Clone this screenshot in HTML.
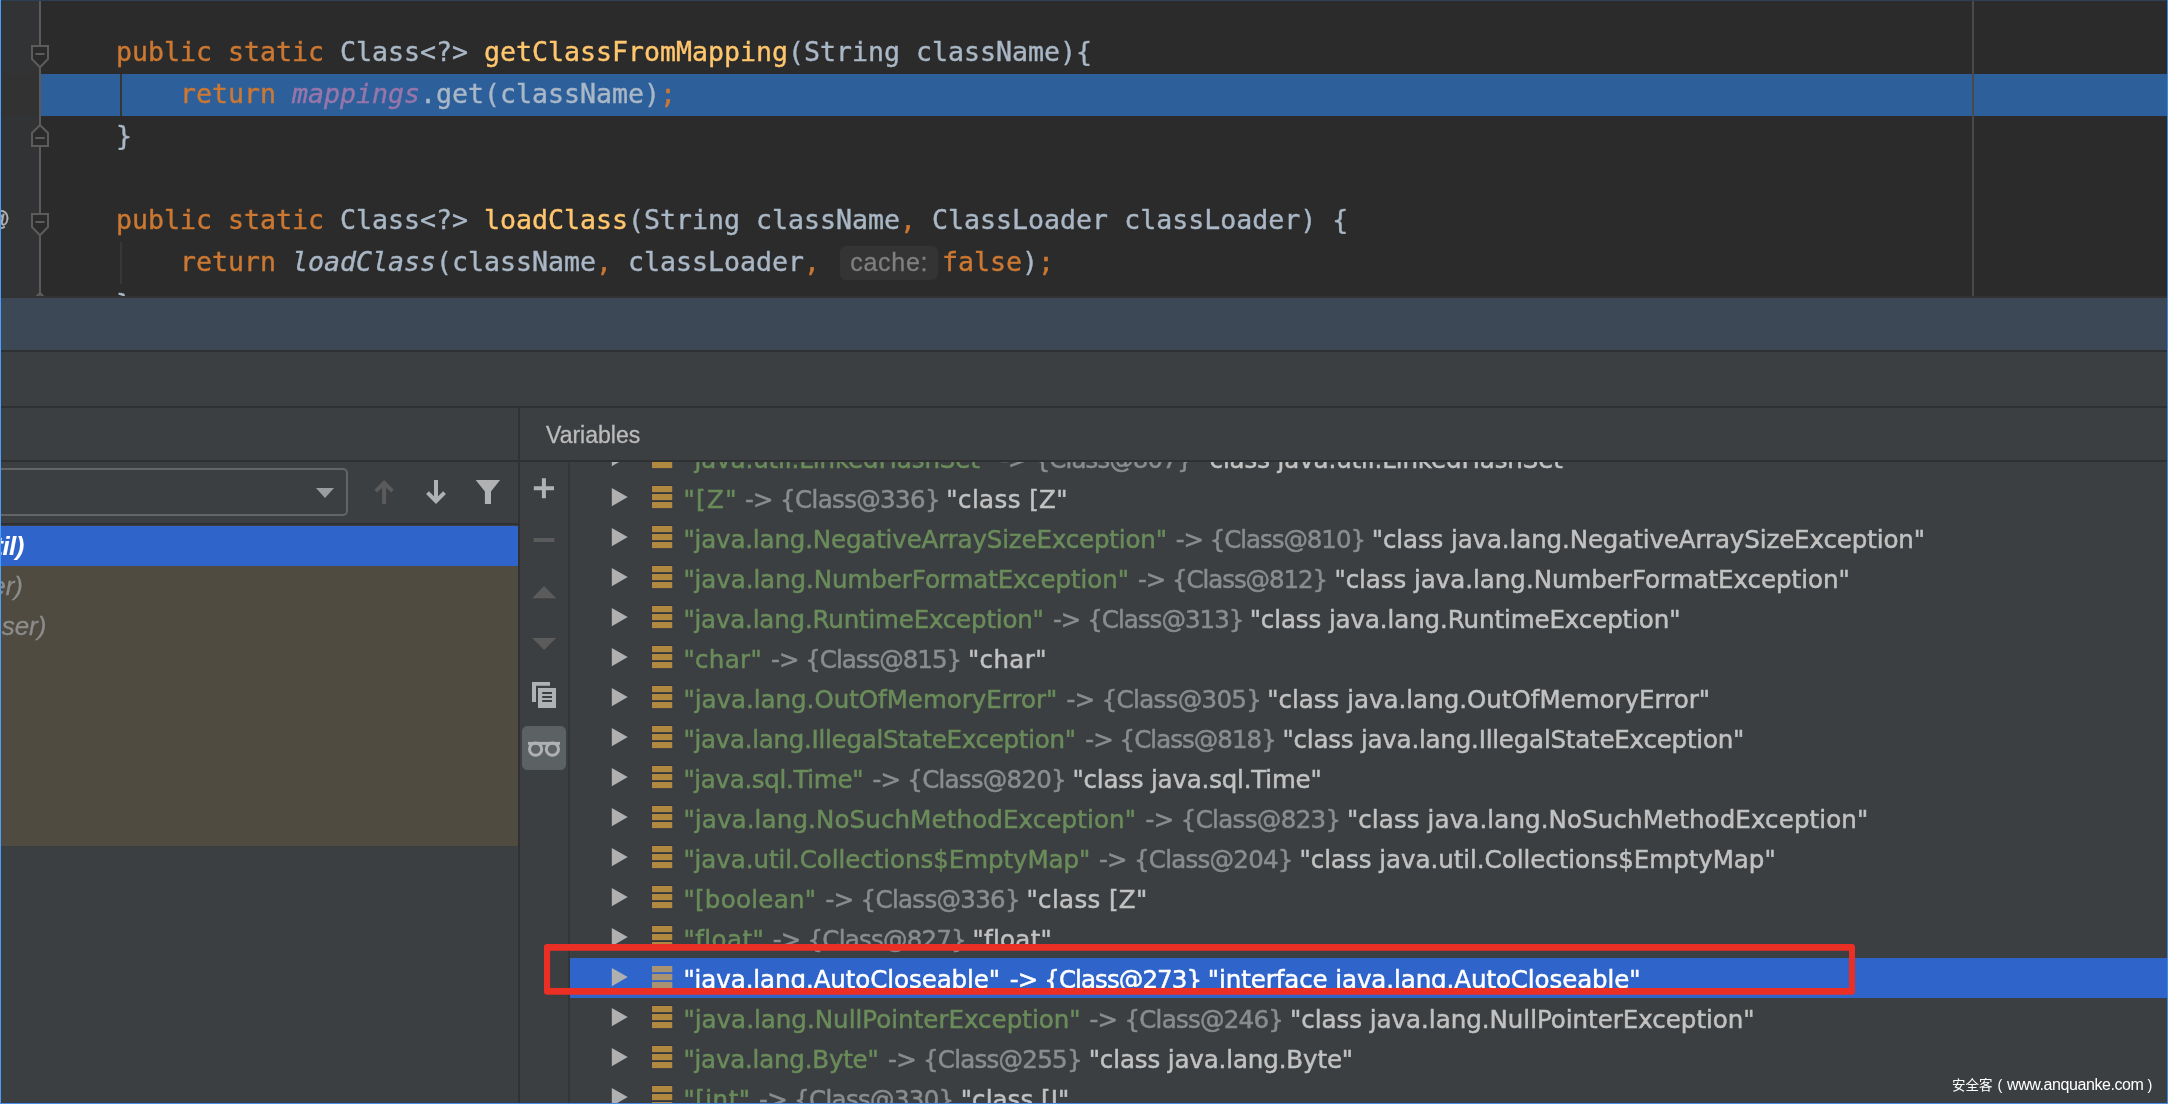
<!DOCTYPE html><html><head><meta charset="utf-8"><title>debug</title><style>
html,body{margin:0;padding:0}
body{width:2168px;height:1104px;overflow:hidden;background:#3c3f41;position:relative;font-family:"Liberation Sans","Noto Sans CJK SC",sans-serif}
.abs{position:absolute}
#app{left:0;top:0;width:2168px;height:1104px;overflow:hidden;will-change:transform}
#editor{left:0;top:0;width:2168px;height:297px;background:#2b2b2b;overflow:hidden}
#gutter{left:0;top:0;width:40px;height:297px;background:#313335}
#gline{left:39px;top:0;width:2px;height:297px;background:#5a5a5a}
#hl{left:41px;top:74px;width:2127px;height:42px;background:#2d5f9b}
#margin{left:1972px;top:0;width:2px;height:296px;background:#4a4a4a}
.cl{position:absolute;left:116px;height:42px;line-height:42px;white-space:pre;font-family:"DejaVu Sans Mono","Liberation Mono",monospace;font-size:26.58px;color:#a9b7c6;letter-spacing:0;-webkit-text-stroke:0.4px currentColor;margin-top:-1px}
.k{color:#cc7832}.f{color:#ffc66d}.p{color:#9876aa;font-style:italic}.i{font-style:italic}
.hint{position:absolute;left:840px;top:246px;width:97.5px;height:34px;border-radius:6px;background:#343434;color:#7f7f7f;font-family:"Liberation Sans",sans-serif;font-size:25px;letter-spacing:0.75px;line-height:33px;text-align:center;-webkit-text-stroke:0.3px currentColor;text-indent:1px}
#band{left:0;top:297px;width:2168px;height:53px;background:#3d4857}
.hline{position:absolute;left:0;width:2168px;height:2px;background:#2f3031}
.row{position:absolute;left:0;width:2168px;height:40px}
.t{position:absolute;top:2.5px;height:40px;line-height:40px;white-space:pre;font-family:"DejaVu Sans","Liberation Sans",sans-serif;font-size:24.5px;-webkit-text-stroke:0.5px currentColor}
.tk{color:#6a8c5a}.tm{color:#8a8c8e}.tv{color:#c2c2c2}
.sel .t,.sel .t span{color:#fff}
</style></head><body><div id="app" class="abs">
<div id="editor" class="abs">
<div id="gutter" class="abs"></div><div id="gline" class="abs"></div>
<div id="hl" class="abs"></div>
<div class="abs" style="left:1px;top:74px;width:38px;height:42px;background:#323232"></div>
<div class="abs" style="left:120px;top:74px;width:2px;height:42px;background:#383634"></div>
<div class="abs" style="left:120px;top:242px;width:2px;height:42px;background:#373737"></div>
<div id="margin" class="abs"></div>
<div class="cl" style="top:32px"><span class="k">public static </span>Class&lt;?&gt; <span class="f">getClassFromMapping</span>(String className){</div>
<div class="cl" style="top:74px">    <span class="k">return </span><span class="p">mappings</span>.get(className)<span class="k">;</span></div>
<div class="cl" style="top:116px">}</div>
<div class="cl" style="top:200px"><span class="k">public static </span>Class&lt;?&gt; <span class="f">loadClass</span>(String className<span class="k">, </span>ClassLoader classLoader) {</div>
<div class="cl" style="top:242px">    <span class="k">return </span><span class="i">loadClass</span>(className<span class="k">, </span>classLoader<span class="k">, </span></div>
<div class="cl" style="top:242px;left:942px"><span class="k">false</span>)<span class="k">;</span></div>
<div class="cl" style="top:284px">}</div>
<div class="hint">cache:</div>
<svg class="abs" style="left:0;top:0" width="60" height="297" viewBox="0 0 60 297" fill="none" stroke="#5c5c5c" stroke-width="2">
<path d="M32 46H48V59L40 67.3L32 59Z" fill="#2b2b2b"/><path d="M35.5 54H44.5"/>
<path d="M32 146.1H48V133L40 125.2L32 133Z" fill="#2b2b2b"/><path d="M35.2 138H44.8"/>
<path d="M32 214H48V227L40 235.2L32 227Z" fill="#2b2b2b"/><path d="M35.5 222H44.5"/>
<path d="M34 299L40 293L46 299"/>
</svg>
<div class="abs" style="left:-12.3px;top:203px;font-family:'Liberation Sans',sans-serif;font-size:22px;color:#b4b4b4;line-height:32px;-webkit-text-stroke:0.3px currentColor">@</div>
</div>
<div id="band" class="abs"></div>
<div class="hline" style="top:296px;height:1.5px;background:#323232"></div>
<div class="hline" style="top:350px"></div>
<div class="hline" style="top:406px"></div>
<div class="hline" style="top:460px"></div>
<div class="abs" style="left:0;top:462px;width:518px;height:642px;overflow:hidden">
<div class="abs" style="left:-20px;top:6px;width:363.5px;height:44px;border:2px solid #646464;border-radius:5px;box-sizing:content-box"></div>
<div class="hline" style="top:60.5px;width:518px"></div>
<div class="abs" style="left:0;top:64px;width:518px;height:40px;background:#2f65ca"></div>
<div class="abs" style="left:0;top:104px;width:518px;height:280px;background:#4f4b41"></div>
<div class="abs" style="right:494.3px;top:63.8px;height:40px;line-height:40px;font-size:26px;font-style:italic;font-weight:bold;color:#fff;white-space:pre;letter-spacing:-0.6px">til)</div>
<div class="abs" style="right:495px;top:103.8px;height:40px;line-height:40px;font-size:26px;font-style:italic;color:#8c8c8c;white-space:pre;-webkit-text-stroke:0.3px currentColor">er)</div>
<div class="abs" style="right:471.6px;top:143.8px;height:40px;line-height:40px;font-size:26px;font-style:italic;color:#8c8c8c;white-space:pre;-webkit-text-stroke:0.3px currentColor">ser)</div>
<svg class="abs" style="left:300px;top:0" width="218" height="62" viewBox="300 462 218 62">
<path d="M316 488H334L325 498Z" fill="#9a9da0"/>
<g fill="none" stroke="#5b5b5b" stroke-width="4"><path d="M384.1 503.9V482.5"/><path d="M375.8 491.2L384.1 482.9L392.4 491.2" stroke-linejoin="miter"/></g>
<g fill="none" stroke="#afb1b3" stroke-width="4"><path d="M436 480V501.5"/><path d="M427.5 492.6L436 501.2L444.5 492.6" stroke-linejoin="miter"/></g>
<path d="M475.7 480H500.1L491 491.4V503.9H484.9V491.4Z" fill="#afb1b3"/>
</svg>
</div>
<div class="abs" style="left:518px;top:407px;width:2px;height:697px;background:#313131"></div>
<div class="abs" style="left:568px;top:462px;width:2px;height:642px;background:#343536"></div>
<div class="abs" style="left:546px;top:409px;height:52px;line-height:52px;font-size:23px;color:#bbbbbb;-webkit-text-stroke:0.3px currentColor">Variables</div>
<svg class="abs" style="left:520px;top:462px" width="48" height="330" viewBox="520 462 48 330">
<path d="M533.8 488.2H554M543.9 478.2V498.2" stroke="#afb1b3" stroke-width="4" fill="none"/>
<path d="M533.6 540H554.4" stroke="#5b5b5b" stroke-width="4" fill="none"/>
<path d="M532.1 598.3L544.1 586.1L556.2 598.3Z" fill="#5b5b5b"/>
<path d="M532.1 638.1L544.1 650L556.2 638.1Z" fill="#5b5b5b"/>
<path d="M532 682H550V685.8H536V702H532Z" fill="#afb1b3"/>
<rect x="538" y="688" width="18" height="20" fill="#afb1b3"/>
<path d="M542.2 693H552M542.2 697H552M542.2 701H552" stroke="#3c3f41" stroke-width="1.8"/>
<rect x="522" y="726" width="44" height="44" rx="5.5" fill="#5c6164"/>
<g fill="none" stroke="#afb1b3" stroke-width="3"><circle cx="535.6" cy="749.2" r="6.1"/><circle cx="552.4" cy="749.2" r="6.1"/><path d="M528 743.4H560"/></g>
</svg>
<div class="abs" id="tree" style="left:570px;top:462px;width:1598px;height:642px;overflow:hidden">
<div class="row" style="top:-25px">
<svg class="abs" style="left:41px;top:10px" width="18" height="21" viewBox="0 0 18 21"><path d="M0.8 0.9L16.7 10L0.8 19.2Z" fill="#b0b0b0"/></svg>
<svg class="abs" style="left:81px;top:8px" width="23" height="25" viewBox="0 0 23 25"><rect x="0.5" y="0.3" width="21.3" height="24" fill="#30353d"/><g fill="#b08840"><rect x="1" y="1" width="20.3" height="6.2"/><rect x="1" y="9" width="20.3" height="6.2"/><rect x="1" y="17" width="20.3" height="6.2"/></g></svg>
<span class="t tk" style="left:113.39999999999998px;letter-spacing:-0.1px">"java.util.LinkedHashSet"</span>
<span class="t tm" style="left:430.20000000000005px;letter-spacing:-0.904px">-&gt; {Class@807}</span>
<span class="t tv" style="left:628.4000000000001px;letter-spacing:-0.105px">"class java.util.LinkedHashSet"</span>
</div>
<div class="row" style="top:15px">
<svg class="abs" style="left:41px;top:10px" width="18" height="21" viewBox="0 0 18 21"><path d="M0.8 0.9L16.7 10L0.8 19.2Z" fill="#b0b0b0"/></svg>
<svg class="abs" style="left:81px;top:8px" width="23" height="25" viewBox="0 0 23 25"><rect x="0.5" y="0.3" width="21.3" height="24" fill="#30353d"/><g fill="#b08840"><rect x="1" y="1" width="20.3" height="6.2"/><rect x="1" y="9" width="20.3" height="6.2"/><rect x="1" y="17" width="20.3" height="6.2"/></g></svg>
<span class="t tk" style="left:113.39999999999998px;letter-spacing:1.383px">"[Z"</span>
<span class="t tm" style="left:174.89999999999998px;letter-spacing:-0.65px">-&gt; {Class@336}</span>
<span class="t tv" style="left:376.29999999999995px;letter-spacing:0.422px">"class [Z"</span>
</div>
<div class="row" style="top:55px">
<svg class="abs" style="left:41px;top:10px" width="18" height="21" viewBox="0 0 18 21"><path d="M0.8 0.9L16.7 10L0.8 19.2Z" fill="#b0b0b0"/></svg>
<svg class="abs" style="left:81px;top:8px" width="23" height="25" viewBox="0 0 23 25"><rect x="0.5" y="0.3" width="21.3" height="24" fill="#30353d"/><g fill="#b08840"><rect x="1" y="1" width="20.3" height="6.2"/><rect x="1" y="9" width="20.3" height="6.2"/><rect x="1" y="17" width="20.3" height="6.2"/></g></svg>
<span class="t tk" style="left:113.39999999999998px;letter-spacing:-0.151px">"java.lang.NegativeArraySizeException"</span>
<span class="t tm" style="left:605.8px;letter-spacing:-1.065px">-&gt; {Class@810}</span>
<span class="t tv" style="left:801.8px;letter-spacing:-0.106px">"class java.lang.NegativeArraySizeException"</span>
</div>
<div class="row" style="top:95px">
<svg class="abs" style="left:41px;top:10px" width="18" height="21" viewBox="0 0 18 21"><path d="M0.8 0.9L16.7 10L0.8 19.2Z" fill="#b0b0b0"/></svg>
<svg class="abs" style="left:81px;top:8px" width="23" height="25" viewBox="0 0 23 25"><rect x="0.5" y="0.3" width="21.3" height="24" fill="#30353d"/><g fill="#b08840"><rect x="1" y="1" width="20.3" height="6.2"/><rect x="1" y="9" width="20.3" height="6.2"/><rect x="1" y="17" width="20.3" height="6.2"/></g></svg>
<span class="t tk" style="left:113.39999999999998px;letter-spacing:-0.067px">"java.lang.NumberFormatException"</span>
<span class="t tm" style="left:568.0px;letter-spacing:-1.065px">-&gt; {Class@812}</span>
<span class="t tv" style="left:764.4000000000001px;letter-spacing:-0.025px">"class java.lang.NumberFormatException"</span>
</div>
<div class="row" style="top:135px">
<svg class="abs" style="left:41px;top:10px" width="18" height="21" viewBox="0 0 18 21"><path d="M0.8 0.9L16.7 10L0.8 19.2Z" fill="#b0b0b0"/></svg>
<svg class="abs" style="left:81px;top:8px" width="23" height="25" viewBox="0 0 23 25"><rect x="0.5" y="0.3" width="21.3" height="24" fill="#30353d"/><g fill="#b08840"><rect x="1" y="1" width="20.3" height="6.2"/><rect x="1" y="9" width="20.3" height="6.2"/><rect x="1" y="17" width="20.3" height="6.2"/></g></svg>
<span class="t tk" style="left:113.39999999999998px;letter-spacing:-0.176px">"java.lang.RuntimeException"</span>
<span class="t tm" style="left:482.9000000000001px;letter-spacing:-0.965px">-&gt; {Class@313}</span>
<span class="t tv" style="left:679.7px;letter-spacing:-0.095px">"class java.lang.RuntimeException"</span>
</div>
<div class="row" style="top:175px">
<svg class="abs" style="left:41px;top:10px" width="18" height="21" viewBox="0 0 18 21"><path d="M0.8 0.9L16.7 10L0.8 19.2Z" fill="#b0b0b0"/></svg>
<svg class="abs" style="left:81px;top:8px" width="23" height="25" viewBox="0 0 23 25"><rect x="0.5" y="0.3" width="21.3" height="24" fill="#30353d"/><g fill="#b08840"><rect x="1" y="1" width="20.3" height="6.2"/><rect x="1" y="9" width="20.3" height="6.2"/><rect x="1" y="17" width="20.3" height="6.2"/></g></svg>
<span class="t tk" style="left:113.39999999999998px;letter-spacing:0.36px">"char"</span>
<span class="t tm" style="left:201.10000000000002px;letter-spacing:-1.004px">-&gt; {Class@815}</span>
<span class="t tv" style="left:397.9px;letter-spacing:0.4px">"char"</span>
</div>
<div class="row" style="top:215px">
<svg class="abs" style="left:41px;top:10px" width="18" height="21" viewBox="0 0 18 21"><path d="M0.8 0.9L16.7 10L0.8 19.2Z" fill="#b0b0b0"/></svg>
<svg class="abs" style="left:81px;top:8px" width="23" height="25" viewBox="0 0 23 25"><rect x="0.5" y="0.3" width="21.3" height="24" fill="#30353d"/><g fill="#b08840"><rect x="1" y="1" width="20.3" height="6.2"/><rect x="1" y="9" width="20.3" height="6.2"/><rect x="1" y="17" width="20.3" height="6.2"/></g></svg>
<span class="t tk" style="left:113.39999999999998px;letter-spacing:-0.007px">"java.lang.OutOfMemoryError"</span>
<span class="t tm" style="left:496.5999999999999px;letter-spacing:-0.681px">-&gt; {Class@305}</span>
<span class="t tv" style="left:697.2px;letter-spacing:0.009px">"class java.lang.OutOfMemoryError"</span>
</div>
<div class="row" style="top:255px">
<svg class="abs" style="left:41px;top:10px" width="18" height="21" viewBox="0 0 18 21"><path d="M0.8 0.9L16.7 10L0.8 19.2Z" fill="#b0b0b0"/></svg>
<svg class="abs" style="left:81px;top:8px" width="23" height="25" viewBox="0 0 23 25"><rect x="0.5" y="0.3" width="21.3" height="24" fill="#30353d"/><g fill="#b08840"><rect x="1" y="1" width="20.3" height="6.2"/><rect x="1" y="9" width="20.3" height="6.2"/><rect x="1" y="17" width="20.3" height="6.2"/></g></svg>
<span class="t tk" style="left:113.39999999999998px;letter-spacing:-0.266px">"java.lang.IllegalStateException"</span>
<span class="t tm" style="left:515.3px;letter-spacing:-0.965px">-&gt; {Class@818}</span>
<span class="t tv" style="left:712.5px;letter-spacing:-0.208px">"class java.lang.IllegalStateException"</span>
</div>
<div class="row" style="top:295px">
<svg class="abs" style="left:41px;top:10px" width="18" height="21" viewBox="0 0 18 21"><path d="M0.8 0.9L16.7 10L0.8 19.2Z" fill="#b0b0b0"/></svg>
<svg class="abs" style="left:81px;top:8px" width="23" height="25" viewBox="0 0 23 25"><rect x="0.5" y="0.3" width="21.3" height="24" fill="#30353d"/><g fill="#b08840"><rect x="1" y="1" width="20.3" height="6.2"/><rect x="1" y="9" width="20.3" height="6.2"/><rect x="1" y="17" width="20.3" height="6.2"/></g></svg>
<span class="t tk" style="left:113.39999999999998px;letter-spacing:-0.321px">"java.sql.Time"</span>
<span class="t tm" style="left:302.4px;letter-spacing:-0.75px">-&gt; {Class@820}</span>
<span class="t tv" style="left:502.5px;letter-spacing:-0.195px">"class java.sql.Time"</span>
</div>
<div class="row" style="top:335px">
<svg class="abs" style="left:41px;top:10px" width="18" height="21" viewBox="0 0 18 21"><path d="M0.8 0.9L16.7 10L0.8 19.2Z" fill="#b0b0b0"/></svg>
<svg class="abs" style="left:81px;top:8px" width="23" height="25" viewBox="0 0 23 25"><rect x="0.5" y="0.3" width="21.3" height="24" fill="#30353d"/><g fill="#b08840"><rect x="1" y="1" width="20.3" height="6.2"/><rect x="1" y="9" width="20.3" height="6.2"/><rect x="1" y="17" width="20.3" height="6.2"/></g></svg>
<span class="t tk" style="left:113.39999999999998px;letter-spacing:0.139px">"java.lang.NoSuchMethodException"</span>
<span class="t tm" style="left:575.5px;letter-spacing:-0.65px">-&gt; {Class@823}</span>
<span class="t tv" style="left:776.9000000000001px;letter-spacing:0.12px">"class java.lang.NoSuchMethodException"</span>
</div>
<div class="row" style="top:375px">
<svg class="abs" style="left:41px;top:10px" width="18" height="21" viewBox="0 0 18 21"><path d="M0.8 0.9L16.7 10L0.8 19.2Z" fill="#b0b0b0"/></svg>
<svg class="abs" style="left:81px;top:8px" width="23" height="25" viewBox="0 0 23 25"><rect x="0.5" y="0.3" width="21.3" height="24" fill="#30353d"/><g fill="#b08840"><rect x="1" y="1" width="20.3" height="6.2"/><rect x="1" y="9" width="20.3" height="6.2"/><rect x="1" y="17" width="20.3" height="6.2"/></g></svg>
<span class="t tk" style="left:113.39999999999998px;letter-spacing:-0.048px">"java.util.Collections$EmptyMap"</span>
<span class="t tm" style="left:529.0px;letter-spacing:-0.742px">-&gt; {Class@204}</span>
<span class="t tv" style="left:729.5px;letter-spacing:-0.024px">"class java.util.Collections$EmptyMap"</span>
</div>
<div class="row" style="top:415px">
<svg class="abs" style="left:41px;top:10px" width="18" height="21" viewBox="0 0 18 21"><path d="M0.8 0.9L16.7 10L0.8 19.2Z" fill="#b0b0b0"/></svg>
<svg class="abs" style="left:81px;top:8px" width="23" height="25" viewBox="0 0 23 25"><rect x="0.5" y="0.3" width="21.3" height="24" fill="#30353d"/><g fill="#b08840"><rect x="1" y="1" width="20.3" height="6.2"/><rect x="1" y="9" width="20.3" height="6.2"/><rect x="1" y="17" width="20.3" height="6.2"/></g></svg>
<span class="t tk" style="left:113.39999999999998px;letter-spacing:0.289px">"[boolean"</span>
<span class="t tm" style="left:255.5px;letter-spacing:-0.688px">-&gt; {Class@336}</span>
<span class="t tv" style="left:456.4000000000001px;letter-spacing:0.378px">"class [Z"</span>
</div>
<div class="row" style="top:455px">
<svg class="abs" style="left:41px;top:10px" width="18" height="21" viewBox="0 0 18 21"><path d="M0.8 0.9L16.7 10L0.8 19.2Z" fill="#b0b0b0"/></svg>
<svg class="abs" style="left:81px;top:8px" width="23" height="25" viewBox="0 0 23 25"><rect x="0.5" y="0.3" width="21.3" height="24" fill="#30353d"/><g fill="#b08840"><rect x="1" y="1" width="20.3" height="6.2"/><rect x="1" y="9" width="20.3" height="6.2"/><rect x="1" y="17" width="20.3" height="6.2"/></g></svg>
<span class="t tk" style="left:113.39999999999998px;letter-spacing:0.467px">"float"</span>
<span class="t tm" style="left:202.70000000000005px;letter-spacing:-0.773px">-&gt; {Class@827}</span>
<span class="t tv" style="left:402.4px;letter-spacing:0.317px">"float"</span>
</div>
<div class="row sel" style="top:495px">
<div class="abs" style="left:0;top:1px;width:1598px;height:40px;background:#2f65ca"></div>
<svg class="abs" style="left:41px;top:10px" width="18" height="21" viewBox="0 0 18 21"><path d="M0.8 0.9L16.7 10L0.8 19.2Z" fill="#b0b0b0"/></svg>
<svg class="abs" style="left:81px;top:8px" width="23" height="25" viewBox="0 0 23 25"><g fill="#a99373"><rect x="1" y="1" width="20.3" height="6.2"/><rect x="1" y="9" width="20.3" height="6.2"/><rect x="1" y="17" width="20.3" height="6.2"/></g></svg>
<span class="t tk" style="left:113.39999999999998px;letter-spacing:-0.073px">"java.lang.AutoCloseable"</span>
<span class="t tm" style="left:439.79999999999995px;letter-spacing:-0.912px">-&gt; {Class@273}</span>
<span class="t tv" style="left:637.8px;letter-spacing:-0.079px">"interface java.lang.AutoCloseable"</span>
</div>
<div class="row" style="top:535px">
<svg class="abs" style="left:41px;top:10px" width="18" height="21" viewBox="0 0 18 21"><path d="M0.8 0.9L16.7 10L0.8 19.2Z" fill="#b0b0b0"/></svg>
<svg class="abs" style="left:81px;top:8px" width="23" height="25" viewBox="0 0 23 25"><rect x="0.5" y="0.3" width="21.3" height="24" fill="#30353d"/><g fill="#b08840"><rect x="1" y="1" width="20.3" height="6.2"/><rect x="1" y="9" width="20.3" height="6.2"/><rect x="1" y="17" width="20.3" height="6.2"/></g></svg>
<span class="t tk" style="left:113.39999999999998px;letter-spacing:0.027px">"java.lang.NullPointerException"</span>
<span class="t tm" style="left:519.5px;letter-spacing:-0.75px">-&gt; {Class@246}</span>
<span class="t tv" style="left:720.0px;letter-spacing:-0.011px">"class java.lang.NullPointerException"</span>
</div>
<div class="row" style="top:575px">
<svg class="abs" style="left:41px;top:10px" width="18" height="21" viewBox="0 0 18 21"><path d="M0.8 0.9L16.7 10L0.8 19.2Z" fill="#b0b0b0"/></svg>
<svg class="abs" style="left:81px;top:8px" width="23" height="25" viewBox="0 0 23 25"><rect x="0.5" y="0.3" width="21.3" height="24" fill="#30353d"/><g fill="#b08840"><rect x="1" y="1" width="20.3" height="6.2"/><rect x="1" y="9" width="20.3" height="6.2"/><rect x="1" y="17" width="20.3" height="6.2"/></g></svg>
<span class="t tk" style="left:113.39999999999998px;letter-spacing:-0.197px">"java.lang.Byte"</span>
<span class="t tm" style="left:318.1px;letter-spacing:-0.742px">-&gt; {Class@255}</span>
<span class="t tv" style="left:518.7px;letter-spacing:-0.119px">"class java.lang.Byte"</span>
</div>
<div class="row" style="top:615px">
<svg class="abs" style="left:41px;top:10px" width="18" height="21" viewBox="0 0 18 21"><path d="M0.8 0.9L16.7 10L0.8 19.2Z" fill="#b0b0b0"/></svg>
<svg class="abs" style="left:81px;top:8px" width="23" height="25" viewBox="0 0 23 25"><rect x="0.5" y="0.3" width="21.3" height="24" fill="#30353d"/><g fill="#b08840"><rect x="1" y="1" width="20.3" height="6.2"/><rect x="1" y="9" width="20.3" height="6.2"/><rect x="1" y="17" width="20.3" height="6.2"/></g></svg>
<span class="t tk" style="left:113.39999999999998px;letter-spacing:0.52px">"[int"</span>
<span class="t tm" style="left:189.0px;letter-spacing:-0.681px">-&gt; {Class@330}</span>
<span class="t tv" style="left:390.79999999999995px;letter-spacing:0.056px">"class [I"</span>
</div>
</div>
<svg class="abs" style="left:540px;top:940px" width="1320" height="60" viewBox="540 940 1320 60"><path fill="#ec2f24" fill-rule="evenodd" d="M547.2 943.9H1851.8a3.2 3.2 0 0 1 3.2 3.2V991.6a3.2 3.2 0 0 1 -3.2 3.2H547.2a3.2 3.2 0 0 1 -3.2 -3.2V947.1a3.2 3.2 0 0 1 3.2 -3.2ZM550.1 950.8V988.1H1849V950.8Z"/></svg>
<div class="abs" style="left:0;top:1070px;width:2168px;height:30px;color:#fff;white-space:pre;line-height:30px;font-family:'Liberation Sans','Noto Sans CJK SC',sans-serif"><span class="abs" style="left:1952.1px;top:1px;font-size:13.5px">安全客</span><span class="abs" style="left:1997.6px;top:-0.5px;font-size:14.5px;-webkit-text-stroke:0">(</span><span class="abs" style="left:2007px;top:-0.5px;font-size:16px;letter-spacing:-0.42px">www.anquanke.com</span><span class="abs" style="left:2147.6px;top:-0.5px;font-size:14.5px">)</span></div>
<div class="abs" style="left:0;top:0;width:2168px;height:1px;background:#2e3f56"></div>
<div class="abs" style="left:0;top:0;width:1.3px;height:1104px;background:#4a9eff"></div>
<div class="abs" style="left:2166.8px;top:0;width:1.2px;height:1104px;background:#3f8ae0"></div>
<div class="abs" style="left:0;top:1102.7px;width:2168px;height:1.3px;background:#4a90e8"></div>
</div></body></html>
